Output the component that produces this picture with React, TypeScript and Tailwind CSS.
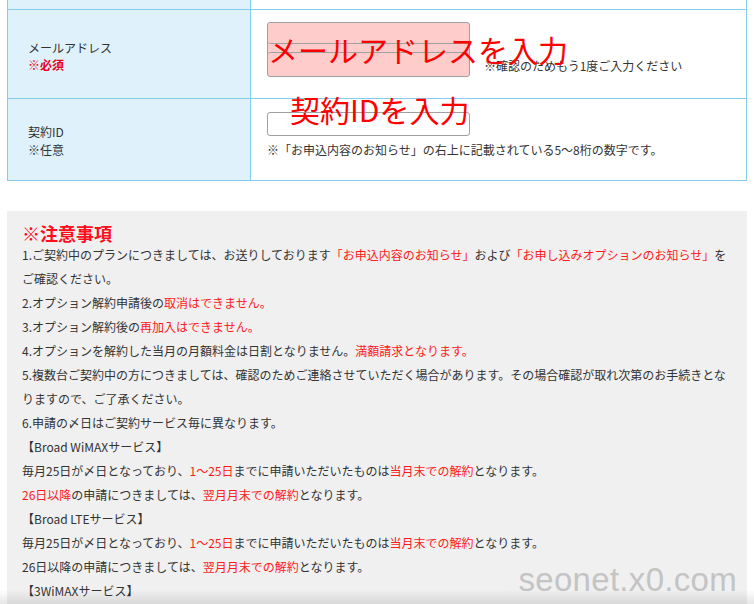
import React from 'react';

const R = ({ children }: { children: React.ReactNode }) => <span className="text-[#ff1a1a]">{children}</span>;

export default function App() {
  return (
    <div
      className="relative h-[604px] w-[754px] overflow-hidden bg-white text-[12px] text-[#333]"
      style={{ fontFamily: '"Noto Sans CJK JP", "Noto Sans", sans-serif' }}
    >
      {/* form table */}
      <div className="mx-[7px] border-x border-[#85cdee]">
        <div className="flex h-[10px] border-b border-[#85cdee]">
          <div className="w-[243px] border-r border-[#85cdee] bg-[#dff2fb]" />
          <div className="flex-1" />
        </div>

        <div className="flex h-[89px] border-b border-[#85cdee]">
          <div className="flex w-[243px] flex-col justify-center border-r border-[#85cdee] bg-[#dff2fb] pl-[20px] pt-[3px] leading-[17px]">
            <p>メールアドレス</p>
            <p className="font-bold text-[#e8001c]">※必須</p>
          </div>
          <div className="flex flex-1 items-end pl-[16px] pt-[12px] pb-[21px]">
            <div className="flex h-[55px] w-[203px] flex-col justify-between rounded-[3px] border border-[#a0a0a0] bg-[#ffcccc]">
              <div className="h-[21px] rounded-[3px] border-b border-[#a0a0a0]" />
              <div className="h-[24px] rounded-[3px] border-t border-[#a0a0a0]" />
            </div>
            <p className="mb-[2px] ml-[14px] leading-[18px]">※確認のためもう1度ご入力ください</p>
          </div>
        </div>

        <div className="flex h-[82px] border-b border-[#85cdee]">
          <div className="flex w-[243px] flex-col justify-center border-r border-[#85cdee] bg-[#dff2fb] pl-[20px] pt-[3px] leading-[18px]">
            <p>契約ID</p>
            <p>※任意</p>
          </div>
          <div className="flex-1 pl-[16px] pt-[13px]">
            <div className="h-[24px] w-[203px] rounded-[3px] border border-[#a0a0a0] bg-white" />
            <p className="mt-[5px] leading-[18px]">※「お申込内容のお知らせ」の右上に記載されている5〜8桁の数字です。</p>
          </div>
        </div>
      </div>

      {/* notice box */}
      <div className="mx-[7px] mt-[30px] bg-[#f0f0f0] pl-[15px] pr-[15px] pt-[12px] pb-8 leading-[24px]">
        <h3 className="text-[18px] font-bold leading-[20px] text-[#ff0d1a]">※注意事項</h3>
        <p>1.ご契約中のプランにつきましては、お送りしております<R>「お申込内容のお知らせ」</R>および<R>「お申し込みオプションのお知らせ」</R>をご確認ください。</p>
        <p>2.オプション解約申請後の<R>取消はできません。</R></p>
        <p>3.オプション解約後の<R>再加入はできません。</R></p>
        <p>4.オプションを解約した当月の月額料金は日割となりません。<R>満額請求となります。</R></p>
        <p>5.複数台ご契約中の方につきましては、確認のためご連絡させていただく場合があります。その場合確認が取れ次第のお手続きとなりますので、ご了承ください。</p>
        <p>6.申請の〆日はご契約サービス毎に異なります。</p>
        <p>【Broad WiMAXサービス】</p>
        <p>毎月25日が〆日となっており、<R>1〜25日</R>までに申請いただいたものは<R>当月末での解約</R>となります。</p>
        <p><R>26日以降</R>の申請につきましては、<R>翌月月末での解約</R>となります。</p>
        <p>【Broad LTEサービス】</p>
        <p>毎月25日が〆日となっており、<R>1〜25日</R>までに申請いただいたものは<R>当月末での解約</R>となります。</p>
        <p>26日以降の申請につきましては、<R>翌月月末での解約</R>となります。</p>
        <p>【3WiMAXサービス】</p>
      </div>

      {/* annotations over the form */}
      <p className="absolute left-[268px] top-[34px] text-[30px] leading-[30px] text-[#ff0000]">メールアドレスを入力</p>
      <p className="absolute left-[290px] top-[94px] text-[30px] leading-[30px] text-[#ff0000]">契約IDを入力</p>

      {/* watermark */}
      <p
        className="absolute right-[17px] top-[562px] text-[33px] leading-[36px] tracking-[0.3px] text-[#c4c4c4]"
        style={{ fontFamily: '"Liberation Sans", Arial, sans-serif' }}
      >
        seonet.x0.com
      </p>

      <div className="absolute inset-x-0 bottom-0 h-[14px] bg-gradient-to-b from-transparent to-black/10" />
    </div>
  );
}
